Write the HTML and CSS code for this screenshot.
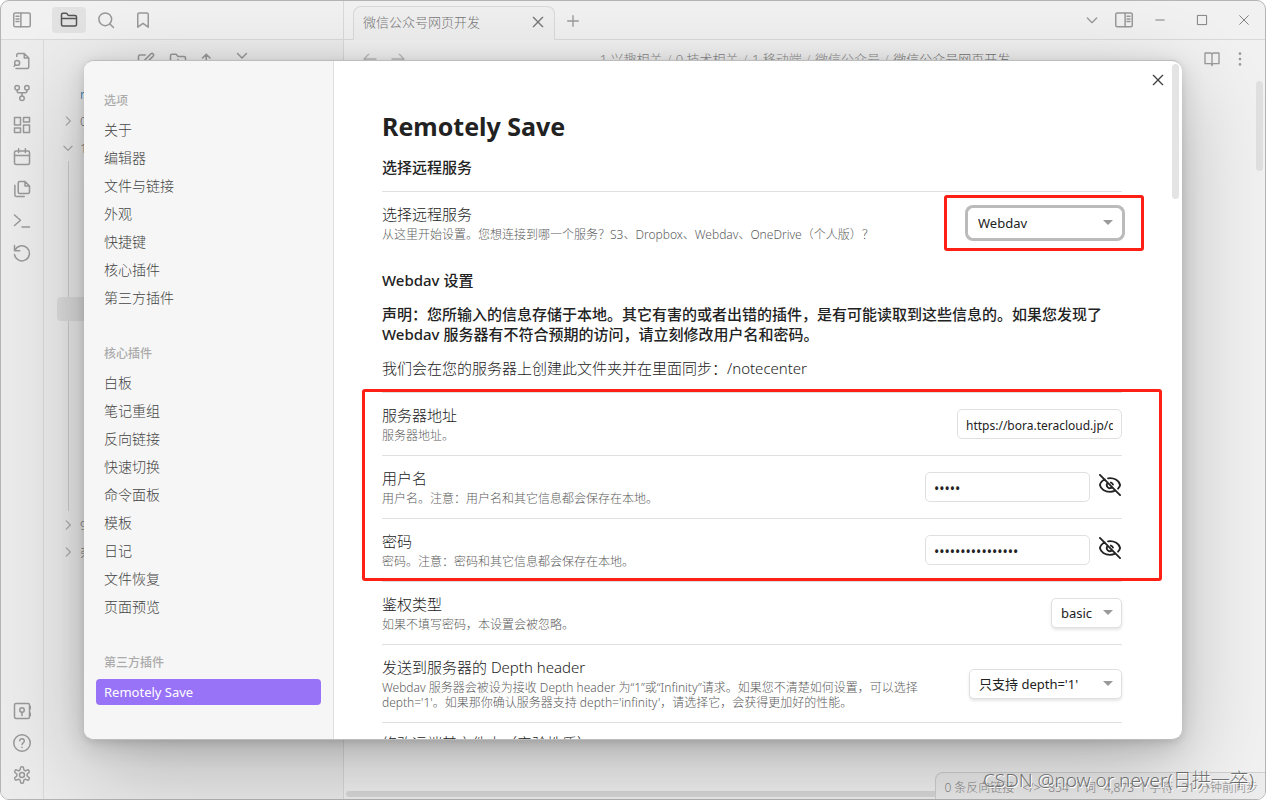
FILE: index.html
```html
<!DOCTYPE html>
<html lang="zh-CN">
<head>
<meta charset="utf-8">
<title>Remotely Save</title>
<link rel="stylesheet" href="styles.css">
</head>
<body>
<svg class="sprite" aria-hidden="true">
  <symbol id="panel" viewBox="0 0 24 24"><rect x="1" y="2.500" width="22" height="18.500" rx="2"/><path d="M10.500 3v18M4 7h4M4 10.500h4M4 14h4"/></symbol>
  <symbol id="folder" viewBox="0 0 24 24"><path d="M4 20h16a2 2 0 0 0 2-2V8a2 2 0 0 0-2-2h-7.900a2 2 0 0 1-1.700-.9l-.8-1.200A2 2 0 0 0 7.900 3H4a2 2 0 0 0-2 2v13a2 2 0 0 0 2 2zM2 10h20"/></symbol>
  <symbol id="search" viewBox="0 0 24 24"><circle cx="11" cy="11" r="8.500"/><path d="m22 22-5-5"/></symbol>
  <symbol id="bookmark" viewBox="0 0 24 24"><path d="m19 21.500-7-5-7 5V4.500a2 2 0 0 1 2-2h10a2 2 0 0 1 2 2z"/></symbol>
  <symbol id="x" viewBox="0 0 24 24"><path d="M19 5 5 19M5 5l14 14"/></symbol>
  <symbol id="plus" viewBox="0 0 24 24"><path d="M12 4v16M4 12h16"/></symbol>
  <symbol id="down" viewBox="0 0 24 24"><path d="m5 9 7 7 7-7"/></symbol>
  <symbol id="right" viewBox="0 0 24 24"><path d="m9 5 7 7-7 7"/></symbol>
  <symbol id="min" viewBox="0 0 24 24"><path d="M7 12h10"/></symbol>
  <symbol id="max" viewBox="0 0 24 24"><path d="M7 7h10v10H7z"/></symbol>
  <symbol id="wclose" viewBox="0 0 24 24"><path d="M17 7 7 17M7 7l10 10"/></symbol>
  <symbol id="filesearch" viewBox="0 0 24 24"><path d="M5 6V4a2 2 0 0 1 2-2h8l6 6v12a2 2 0 0 1-2 2H4M15 2v6h6"/><circle cx="5.500" cy="14.500" r="3.300"/><path d="m1.500 19 1.600-2"/></symbol>
  <symbol id="fork" viewBox="0 0 24 24"><circle cx="12" cy="19" r="3"/><circle cx="5.500" cy="5" r="3"/><circle cx="18.500" cy="5" r="3"/><path d="M18.500 8v1.500a2 2 0 0 1-2 2h-9a2 2 0 0 1-2-2V8M12 11.500V16"/></symbol>
  <symbol id="grid" viewBox="0 0 24 24"><path d="M2 2h8v10H2zM14 2h8v6h-8zM14 12h8v10h-8zM2 16h8v6H2z"/></symbol>
  <symbol id="calendar" viewBox="0 0 24 24"><rect x="2" y="4" width="20" height="18" rx="2"/><path d="M7.500 1v5M16.500 1v5M2 10h20"/></symbol>
  <symbol id="files" viewBox="0 0 24 24"><path d="M16 2H9a2 2 0 0 0-2 2v12a2 2 0 0 0 2 2h11a2 2 0 0 0 2-2V8zM16 2v6h6M2.500 7v13a2 2 0 0 0 2 2H15"/></symbol>
  <symbol id="terminal" viewBox="0 0 24 24"><path d="m2 18 8-7-8-7M12 20h10"/></symbol>
  <symbol id="undo" viewBox="0 0 24 24"><path d="M2 2v7h7M2.500 9a10 10 0 1 1-.5 5"/></symbol>
  <symbol id="vault" viewBox="0 0 24 24"><rect x="2" y="2" width="20" height="20" rx="2"/><circle cx="12" cy="10.500" r="3"/><path d="M12 13.500V18M23.500 6v3M23.500 15v3"/></symbol>
  <symbol id="help" viewBox="0 0 24 24"><circle cx="12" cy="12" r="11"/><path d="M9 9a3 3 0 0 1 6 .5c0 2-3 2.500-3 4.500M12 17.500v.5"/></symbol>
  <symbol id="gear" viewBox="0 0 24 24"><path d="M12.200 1h-.4a2 2 0 0 0-2 2v1a2 2 0 0 1-1 1.700l-.4.300a2 2 0 0 1-2 0l-1-.5a2 2 0 0 0-2.700.7l-.2.400a2 2 0 0 0 .7 2.700l1 .5a2 2 0 0 1 1 1.700v1a2 2 0 0 1-1 1.700l-1 .5a2 2 0 0 0-.7 2.700l.2.400a2 2 0 0 0 2.700.7l1-.5a2 2 0 0 1 2 0l.4.300a2 2 0 0 1 1 1.700v1a2 2 0 0 0 2 2h.4a2 2 0 0 0 2-2v-1a2 2 0 0 1 1-1.700l.4-.3a2 2 0 0 1 2 0l1 .5a2 2 0 0 0 2.700-.7l.2-.4a2 2 0 0 0-.7-2.700l-1-.5a2 2 0 0 1-1-1.700v-1a2 2 0 0 1 1-1.700l1-.5a2 2 0 0 0 .7-2.700l-.2-.4a2 2 0 0 0-2.700-.7l-1 .5a2 2 0 0 1-2 0l-.4-.3a2 2 0 0 1-1-1.700V3a2 2 0 0 0-2-2z"/><circle cx="12" cy="12" r="3.300"/></symbol>
  <symbol id="edit" viewBox="0 0 24 24"><path d="M11 4H4a2 2 0 0 0-2 2v14a2 2 0 0 0 2 2h14a2 2 0 0 0 2-2v-7M18.500 2.500a2.100 2.100 0 0 1 3 3L12 15l-4 1 1-4z"/></symbol>
  <symbol id="newfolder" viewBox="0 0 24 24"><path d="M4 20h16a2 2 0 0 0 2-2V8a2 2 0 0 0-2-2h-8L9.500 3H4a2 2 0 0 0-2 2v13a2 2 0 0 0 2 2zM12 10v6M9 13h6"/></symbol>
  <symbol id="sort" viewBox="0 0 24 24"><path d="M7 21V3M2 8l5-5 5 5M16 12h6M16 16h4M16 20h2"/></symbol>
  <symbol id="collapse" viewBox="0 0 24 24"><path d="m6 2 6 6 6-6M6 22l6-6 6 6"/></symbol>
  <symbol id="back" viewBox="0 0 24 24"><path d="M21 12H3M10 5l-7 7 7 7"/></symbol>
  <symbol id="forward" viewBox="0 0 24 24"><path d="M3 12h18M14 5l7 7-7 7"/></symbol>
  <symbol id="book" viewBox="0 0 24 24"><path d="M12 5v17M1.500 3h8a2.500 2.500 0 0 1 2.500 2.500A2.500 2.500 0 0 1 14.500 3h8v16h-8a2.500 2.500 0 0 0-2.500 2 2.500 2.500 0 0 0-2.500-2h-8z"/></symbol>
  <symbol id="dots" viewBox="0 0 24 24"><path d="M12 4v.1M12 12v.1M12 20v.1" stroke-width="4"/></symbol>
  <symbol id="eyeoff" viewBox="0 0 24 24"><path d="M9.900 4.700A11 9 0 0 1 23 12a9 8 0 0 1-2.200 4M6.500 6A10 8 0 0 0 1 12c1 4.500 5.500 7.500 11 7.500a12 10 0 0 0 5.500-1.300M9.500 9.800a3.300 3.300 0 1 0 4.800 4.600M13 9.300a3.300 3.300 0 0 1 2.200 2.200M1 1l22 22"/></symbol>
</svg>

<div class="window">
  <header class="titlebar">
    <div class="title-left">
      <button class="ic" aria-label="侧边栏"><svg><use href="#panel"/></svg></button>
      <button class="ic ic-active" aria-label="文件"><svg><use href="#folder"/></svg></button>
      <button class="ic" aria-label="搜索"><svg><use href="#search"/></svg></button>
      <button class="ic" aria-label="书签"><svg><use href="#bookmark"/></svg></button>
    </div>
    <div class="tabs">
      <div class="tab"><span>微信公众号网页开发</span><button class="ic small" aria-label="关闭标签"><svg><use href="#x"/></svg></button></div>
      <button class="ic small" aria-label="新标签"><svg><use href="#plus"/></svg></button>
    </div>
    <div class="window-controls">
      <button class="ic small" aria-label="标签列表"><svg><use href="#down"/></svg></button>
      <button class="ic flip" aria-label="右侧边栏"><svg><use href="#panel"/></svg></button>
      <button class="ic wc" aria-label="最小化"><svg><use href="#min"/></svg></button>
      <button class="ic wc" aria-label="最大化"><svg><use href="#max"/></svg></button>
      <button class="ic wc" aria-label="关闭窗口"><svg><use href="#wclose"/></svg></button>
    </div>
  </header>
  <div class="workspace">
    <nav class="ribbon">
      <button class="ic" aria-label="快速切换"><svg><use href="#filesearch"/></svg></button>
      <button class="ic" aria-label="关系图谱"><svg><use href="#fork"/></svg></button>
      <button class="ic" aria-label="白板"><svg><use href="#grid"/></svg></button>
      <button class="ic" aria-label="日记"><svg><use href="#calendar"/></svg></button>
      <button class="ic" aria-label="模板"><svg><use href="#files"/></svg></button>
      <button class="ic" aria-label="命令面板"><svg><use href="#terminal"/></svg></button>
      <button class="ic" aria-label="同步"><svg><use href="#undo"/></svg></button>
      <span class="spacer"></span>
      <button class="ic" aria-label="仓库"><svg><use href="#vault"/></svg></button>
      <button class="ic" aria-label="帮助"><svg><use href="#help"/></svg></button>
      <button class="ic" aria-label="设置"><svg><use href="#gear"/></svg></button>
    </nav>
    <aside class="explorer">
      <div class="explorer-tools">
        <button class="ic" aria-label="新建笔记"><svg><use href="#edit"/></svg></button>
        <button class="ic" aria-label="新建文件夹"><svg><use href="#newfolder"/></svg></button>
        <button class="ic" aria-label="排序"><svg><use href="#sort"/></svg></button>
        <button class="ic" aria-label="折叠"><svg><use href="#collapse"/></svg></button>
      </div>
      <div class="tree">
        <div class="node vault">note</div>
        <div class="node"><svg><use href="#right"/></svg>0 技术相关</div>
        <div class="node"><svg><use href="#down"/></svg>1 兴趣相关</div>
        <div class="branch"><div class="current"></div></div>
        <div class="node"><svg><use href="#right"/></svg>9 归档</div>
        <div class="node"><svg><use href="#right"/></svg>杂项</div>
      </div>
    </aside>
    <main class="editor">
      <div class="view-header">
        <div class="history">
          <button class="ic small" aria-label="后退"><svg><use href="#back"/></svg></button>
          <button class="ic small" aria-label="前进"><svg><use href="#forward"/></svg></button>
        </div>
        <div class="crumbs">1 兴趣相关 <i>/</i> 0 技术相关 <i>/</i> 1 移动端 <i>/</i> 微信公众号 <i>/</i> <b>微信公众号网页开发</b></div>
        <div class="view-actions">
          <button class="ic small" aria-label="阅读"><svg><use href="#book"/></svg></button>
          <button class="ic small" aria-label="更多"><svg><use href="#dots"/></svg></button>
        </div>
      </div>
      <div class="page-scroll"></div>
      <div class="side-scroll"></div>
      <footer class="status"><span>0 条反向链接</span><span>&lt;/&gt;</span><span>854 个词</span><span>4,873 个字符</span><span>31 分钟前同步</span></footer>
    </main>
  </div>
</div>

<div class="overlay">
  <div class="modal" role="dialog" aria-label="设置">
    <nav class="menu">
      <section>
        <h4>选项</h4>
        <button>关于</button><button>编辑器</button><button>文件与链接</button><button>外观</button><button>快捷键</button><button>核心插件</button><button>第三方插件</button>
      </section>
      <section>
        <h4>核心插件</h4>
        <button>白板</button><button>笔记重组</button><button>反向链接</button><button>快速切换</button><button>命令面板</button><button>模板</button><button>日记</button><button>文件恢复</button><button>页面预览</button>
      </section>
      <section>
        <h4>第三方插件</h4>
        <button class="selected">Remotely Save</button>
      </section>
    </nav>
    <div class="content">
      <h2>Remotely Save</h2>
      <h3>选择远程服务</h3>
      <div class="row">
        <div class="info"><label for="service">选择远程服务</label><p>从这里开始设置。您想连接到哪一个服务？S3、Dropbox、Webdav、OneDrive（个人版）？</p></div>
        <div class="control marked"><div class="pick focus"><select id="service"><option>Webdav</option></select></div></div>
      </div>
      <h3 class="next">Webdav 设置</h3>
      <p class="notice">声明：您所输入的信息存储于本地。其它有害的或者出错的插件，是有可能读取到这些信息的。如果您发现了 Webdav 服务器有不符合预期的访问，请立刻修改用户名和密码。</p>
      <p class="note">我们会在您的服务器上创建此文件夹并在里面同步：/notecenter</p>
      <div class="account">
        <div class="row">
          <div class="info"><label for="url">服务器地址</label><p>服务器地址。</p></div>
          <div class="control"><input id="url" type="text" value="https://bora.teracloud.jp/dav/"></div>
        </div>
        <div class="row">
          <div class="info"><label for="user">用户名</label><p>用户名。注意：用户名和其它信息都会保存在本地。</p></div>
          <div class="control"><input id="user" type="password" value="admin"><button class="eye" aria-label="显示用户名"><svg><use href="#eyeoff"/></svg></button></div>
        </div>
        <div class="row">
          <div class="info"><label for="pass">密码</label><p>密码。注意：密码和其它信息都会保存在本地。</p></div>
          <div class="control"><input id="pass" type="password" value="abcdefghijklmnop"><button class="eye" aria-label="显示密码"><svg><use href="#eyeoff"/></svg></button></div>
        </div>
      </div>
      <div class="row">
        <div class="info"><label for="auth">鉴权类型</label><p>如果不填写密码，本设置会被忽略。</p></div>
        <div class="control"><div class="pick"><select id="auth"><option>basic</option></select></div></div>
      </div>
      <div class="row">
        <div class="info"><label for="depth">发送到服务器的 Depth header</label><p>Webdav 服务器会被设为接收 Depth header 为“1”或“Infinity”请求。如果您不清楚如何设置，可以选择 depth='1'。如果那你确认服务器支持 depth='infinity'，请选择它，会获得更加好的性能。</p></div>
        <div class="control"><div class="pick wide"><select id="depth"><option>只支持 depth='1'</option></select></div></div>
      </div>
      <div class="row last">
        <div class="info"><label>修改远端基文件夹（实验性质）</label></div>
      </div>
    </div>
    <button class="ic small close" aria-label="关闭"><svg><use href="#x"/></svg></button>
    <div class="modal-scroll"></div>
  </div>
</div>
<div class="watermark">CSDN @now or never(日拱一卒)</div>
</body>
</html>
```
FILE: styles.css
```css
* { box-sizing: border-box; }

body {
  margin: 0;
  height: 100vh;
  overflow: hidden;
  background: #fff;
  color: #222;
  font: 300 13px/20px "Noto Sans", "Noto Sans CJK SC", sans-serif;
}

h2, h3, h4, p { margin: 0; }
button, input, select { font: inherit; color: inherit; }
button { border: 0; padding: 0; background: none; }

svg {
  width: 18px;
  height: 18px;
  display: block;
  flex: none;
  fill: none;
  stroke: currentColor;
  stroke-width: 2;
  stroke-linecap: round;
  stroke-linejoin: round;
}
.sprite { position: absolute; width: 0; height: 0; }

.ic {
  display: flex;
  align-items: center;
  justify-content: center;
  flex: none;
  width: 34px;
  height: 26px;
  color: #999;
  border-radius: 4px;
}
.small svg { width: 16px; height: 16px; }
.flip svg { transform: scaleX(-1); }

.window {
  height: 100vh;
  display: flex;
  flex-direction: column;
  border: 1px solid #b5b5b5;
  border-radius: 9px;
  overflow: hidden;
  background: #f1f1f1;
}

.titlebar {
  display: flex;
  height: 39px;
  border-bottom: 1px solid #d9d9d9;
  flex: none;
}
.title-left {
  display: flex;
  align-items: center;
  gap: 3px;
  width: 343px;
  padding-left: 4px;
  border-right: 1px solid #d9d9d9;
}
.title-left .ic:first-child { margin-right: 10px; }
.title-left .ic-active { background: #e2e2e2; color: #555; }

.tabs { flex: 1; display: flex; align-items: flex-end; padding-left: 9px; }
.tabs > .ic { height: 36px; margin-left: 1px; }
.tab {
  display: flex;
  align-items: center;
  justify-content: space-between;
  width: 202px;
  height: 34px;
  margin-bottom: -1px;
  padding: 0 0 3px 9px;
  border: 1px solid #d9d9d9;
  border-bottom-color: #efefef;
  border-radius: 8px 8px 0 0;
  background: #efefef;
  color: #777;
}
.tab .ic { color: #777; width: 32px; }
.window-controls { display: flex; align-items: center; }
.window-controls .flip { width: 30px; }
.wc { width: 42px; color: #777; }
.wc svg { width: 22px; height: 22px; stroke-width: 1; stroke-linecap: butt; }

.workspace { flex: 1; display: flex; min-height: 0; }
.ribbon {
  display: flex;
  flex-direction: column;
  align-items: center;
  gap: 6px;
  width: 43px;
  padding: 8px 0 11px;
  background: #ececec;
  border-right: 1px solid #d9d9d9;
}
.spacer { flex: 1; }

.explorer { width: 300px; background: #ececec; border-right: 1px solid #d9d9d9; }
.explorer-tools { display: flex; justify-content: center; height: 40px; padding-top: 8px; }
.explorer-tools .ic { width: 32px; }
.tree { padding: 0 12px; color: #777; }
.node { display: flex; align-items: center; gap: 5px; height: 27px; padding-left: 5px; }
.node svg { width: 14px; height: 14px; color: #aaa; }
.node.vault { padding-left: 24px; color: #0a6ea8; }
.branch { height: 350px; margin-left: 12px; border-left: 1px solid #ccc; padding-top: 136px; }
.current { height: 24px; margin-left: -12px; border-radius: 4px; background: #dcdcdc; }

.editor { flex: 1; position: relative; min-width: 0; }
.view-header { display: flex; align-items: center; height: 37px; padding: 0 11px 0 12px; }
.history, .view-actions { display: flex; width: 70px; }
.history .ic, .view-actions .ic { width: 28px; }
.history .ic { color: #bbb; }
.view-actions { justify-content: flex-end; }
.crumbs { flex: 1; text-align: center; color: #888; white-space: nowrap; }
.crumbs i { font-style: normal; color: #aaa; padding: 0 1px; }
.crumbs b { font-weight: 300; color: #777; }
.side-scroll {
  position: absolute;
  top: 41px;
  right: 2px;
  width: 7px;
  height: 90px;
  border-radius: 4px;
  background: #e0e0e0;
}
.page-scroll {
  position: absolute;
  left: 2px;
  right: 0;
  bottom: 2px;
  height: 6px;
  border-radius: 3px;
  background: #d9d9d9;
}
.status {
  position: absolute;
  right: 0;
  bottom: 0;
  display: flex;
  gap: 8px;
  padding: 5px 7px 1px 8px;
  border: 1px solid #d0d0d0;
  border-width: 1px 0 0 1px;
  border-radius: 8px 0 0 0;
  background: #ececec;
  color: #888;
  font-size: 12px;
  white-space: nowrap;
}

.overlay { position: absolute; inset: 0; padding: 60px 84px; display: flex; }
.modal {
  position: relative;
  flex: 1;
  display: flex;
  overflow: hidden;
  border: 1px solid #bdbdbd;
  border-width: 1px 0;
  border-radius: 10px;
  background: #fff;
  box-shadow: 0 2px 7px rgba(0, 0, 0, .09), 0 6px 25px rgba(0, 0, 0, .14), 0 30px 90px rgba(0, 0, 0, .24);
}

.menu {
  width: 250px;
  flex: none;
  padding: 31px 12px 0;
  background: #f6f6f6;
  border-right: 1px solid #e0e0e0;
}
.menu section { display: flex; flex-direction: column; gap: 2px; margin-bottom: 34px; }
.menu h4 { margin-bottom: 5px; padding-left: 8px; font-size: 12px; line-height: 18px; font-weight: 500; color: #ababab; }
.menu button { height: 26px; padding: 0 8px; border-radius: 4px; font-size: 14px; line-height: 20px; text-align: left; color: #444; }
.menu .selected { background: #9873f7; color: #fff; font-size: 13px; font-weight: 400; }

.content { flex: 1; min-width: 0; padding: 48px 60px 0 48px; }
h2 { font-size: 25px; line-height: 34px; font-weight: 700; }
h3, .notice, .note { margin-top: 14px; font-size: 15px; line-height: 20px; }
h3, .notice { font-weight: 500; }
h3 + .row, .note + .account { margin-top: 14px; }
.next { margin-top: 16px; }

.row {
  display: flex;
  align-items: center;
  gap: 16px;
  padding: 12px 0;
  border-top: 1px solid #e0e0e0;
}
.row.last { padding-top: 10px; }
.info { flex: 1; min-width: 0; }
.info label { display: block; font-size: 15px; line-height: 20px; }
.info p { margin-top: 3px; font-size: 12px; line-height: 15px; color: #5c5c5c; }
.control { position: relative; display: flex; gap: 8px; height: 30px; margin: -4px 0; font-weight: 400; }
.control input {
  width: 165px;
  height: 30px;
  padding: 2px 8px 0;
  border: 1px solid #e0e0e0;
  border-radius: 5px;
  background: #fff;
}
.control input[type="text"] { font-size: 12px; }
.control input[type="password"] { font-size: 14px; }
.eye { display: flex; align-items: center; justify-content: center; width: 24px; height: 26px; }
.eye svg { width: 22px; height: 22px; }

.pick { position: relative; }
.pick select {
  width: 71px;
  height: 30px;
  padding: 0 9px;
  border: 1px solid #e0e0e0;
  border-radius: 5px;
  background: #fff;
  box-shadow: 0 2px 3px rgba(0, 0, 0, .1);
  appearance: none;
}
.pick::after {
  content: "";
  position: absolute;
  right: 9px;
  top: 12px;
  border: 5px solid transparent;
  border-top-color: #999;
  border-bottom: 0;
  pointer-events: none;
}
.wide select { width: 153px; }
.focus select { width: 154px; border-color: #fff; box-shadow: 0 0 0 3px #bbb; }

.marked::after, .account::after {
  content: "";
  position: absolute;
  border: 3px solid #ff2015;
  border-radius: 3px;
  pointer-events: none;
}
.marked::after { inset: -13px -22px -13px -24px; }
.account { position: relative; }
.account::after { inset: -3px -40px 0 -20px; }

.close { position: absolute; top: 6px; right: 7px; color: #444; }
.modal-scroll {
  position: absolute;
  top: 3px;
  right: 3px;
  width: 7px;
  height: 135px;
  border-radius: 4px;
  background: #e4e4e4;
}

.watermark {
  position: absolute;
  right: 12px;
  bottom: 7px;
  color: rgba(80, 80, 80, .8);
  font-size: 19px;
  line-height: 26px;
  text-shadow: 1px 1px 0 #fff;
  white-space: nowrap;
}
```
